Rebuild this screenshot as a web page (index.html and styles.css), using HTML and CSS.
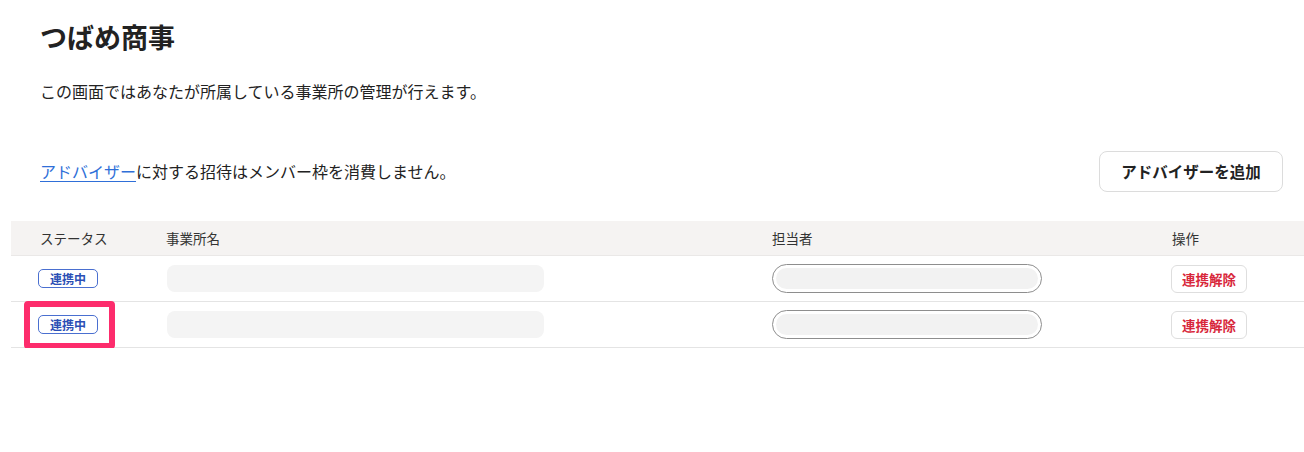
FILE: index.html
```html
<!DOCTYPE html>
<html lang="ja">
<head>
<meta charset="UTF-8">
<meta name="viewport" content="width=device-width, initial-scale=1.0">
<title>事業所の管理</title>
<link rel="stylesheet" href="styles.css">
</head>
<body>
<div class="page">
    <div class="intro">
        <h1 class="title">つばめ商事</h1>
        <p class="lead">この画面ではあなたが所属している事業所の管理が行えます。</p>
        <div class="notice-row">
            <p class="notice"><a href="#" class="link">アドバイザー</a>に対する招待はメンバー枠を消費しません。</p>
            <button class="add-button">アドバイザーを追加</button>
        </div>
    </div>

    <!-- office list -->
    <div class="office-table">
        <div class="row head">
            <div class="cell">ステータス</div>
            <div class="cell">事業所名</div>
            <div class="cell">担当者</div>
            <div class="cell">操作</div>
        </div>
        <div class="row">
            <div class="cell"><span class="badge">連携中</span></div>
            <div class="cell"><div class="placeholder"></div></div>
            <div class="cell"><div class="person"><div class="person-fill"></div></div></div>
            <div class="cell"><button class="unlink">連携解除</button></div>
        </div>
        <div class="row">
            <div class="cell">
                <span class="badge">連携中</span>
                <span class="highlight"></span>
            </div>
            <div class="cell"><div class="placeholder"></div></div>
            <div class="cell"><div class="person"><div class="person-fill"></div></div></div>
            <div class="cell"><button class="unlink">連携解除</button></div>
        </div>
    </div>
</div>
</body>
</html>
```

FILE: styles.css
```css
body {
    margin: 0;
    background: #fff;
    color: #222;
    font-family: "Noto Sans CJK JP", "Noto Sans", sans-serif;
}

.page {
    padding: 19px 0 0 11px;
}

.intro {
    padding: 0 21px 0 29px;
}

.title {
    margin: 0;
    font-size: 27px;
    line-height: 36px;
    font-weight: 700;
    color: #222;
}

.lead {
    margin: 24px 0 0;
    font-size: 16px;
    line-height: 24px;
}

.notice-row {
    display: flex;
    align-items: center;
    justify-content: space-between;
    margin-top: 48px;
    height: 40px;
}

.notice {
    margin: 0;
    font-size: 16px;
    line-height: 24px;
}

.link {
    color: #2f6fd8;
    text-decoration: underline;
    text-underline-offset: 3px;
}

.add-button {
    height: 41px;
    width: 184px;
    padding: 0;
    border: 1px solid #dcdcdc;
    border-radius: 8px;
    background: #fff;
    font-family: inherit;
    font-size: 15.5px;
    font-weight: 700;
    color: #222;
}

.office-table {
    margin-top: 30px;
}

.row {
    display: grid;
    grid-template-columns: 126px 606px 400px 1fr;
    align-items: center;
    padding-left: 29px;
    height: 45px;
    border-bottom: 1px solid #e4e4e4;
}

.row.head {
    height: 34px;
    background: #f5f3f2;
    border-bottom: 1px solid #eae8e7;
    font-size: 13.5px;
    color: #333;
}

.cell {
    position: relative;
    display: flex;
    align-items: center;
}

.badge {
    box-sizing: border-box;
    width: 60px;
    height: 19px;
    margin-left: -2px;
    border: 1px solid #4a6fd0;
    border-radius: 5px;
    text-align: center;
    font-size: 12px;
    line-height: 17px;
    font-weight: 700;
    color: #2b4fb5;
}

.highlight {
    position: absolute;
    left: -16px;
    top: -14px;
    width: 91px;
    height: 48px;
    box-sizing: border-box;
    border: 6px solid #fd2c6c;
    border-radius: 4px;
}

.placeholder {
    width: 377px;
    height: 27px;
    margin-left: 1px;
    border-radius: 8px;
    background: #f4f4f4;
}

.person {
    box-sizing: border-box;
    width: 270px;
    height: 29px;
    padding: 3px;
    border: 1.5px solid #8e8e8e;
    border-radius: 15px;
    background: #fff;
}

.person-fill {
    height: 100%;
    border-radius: 12px;
    background: #f2f2f2;
}

.unlink {
    box-sizing: border-box;
    width: 76px;
    height: 28px;
    margin-left: -1px;
    padding: 0;
    border: 1px solid #dedede;
    border-radius: 6px;
    background: #fff;
    font-family: inherit;
    font-size: 13.5px;
    font-weight: 700;
    color: #d8273b;
}
```
